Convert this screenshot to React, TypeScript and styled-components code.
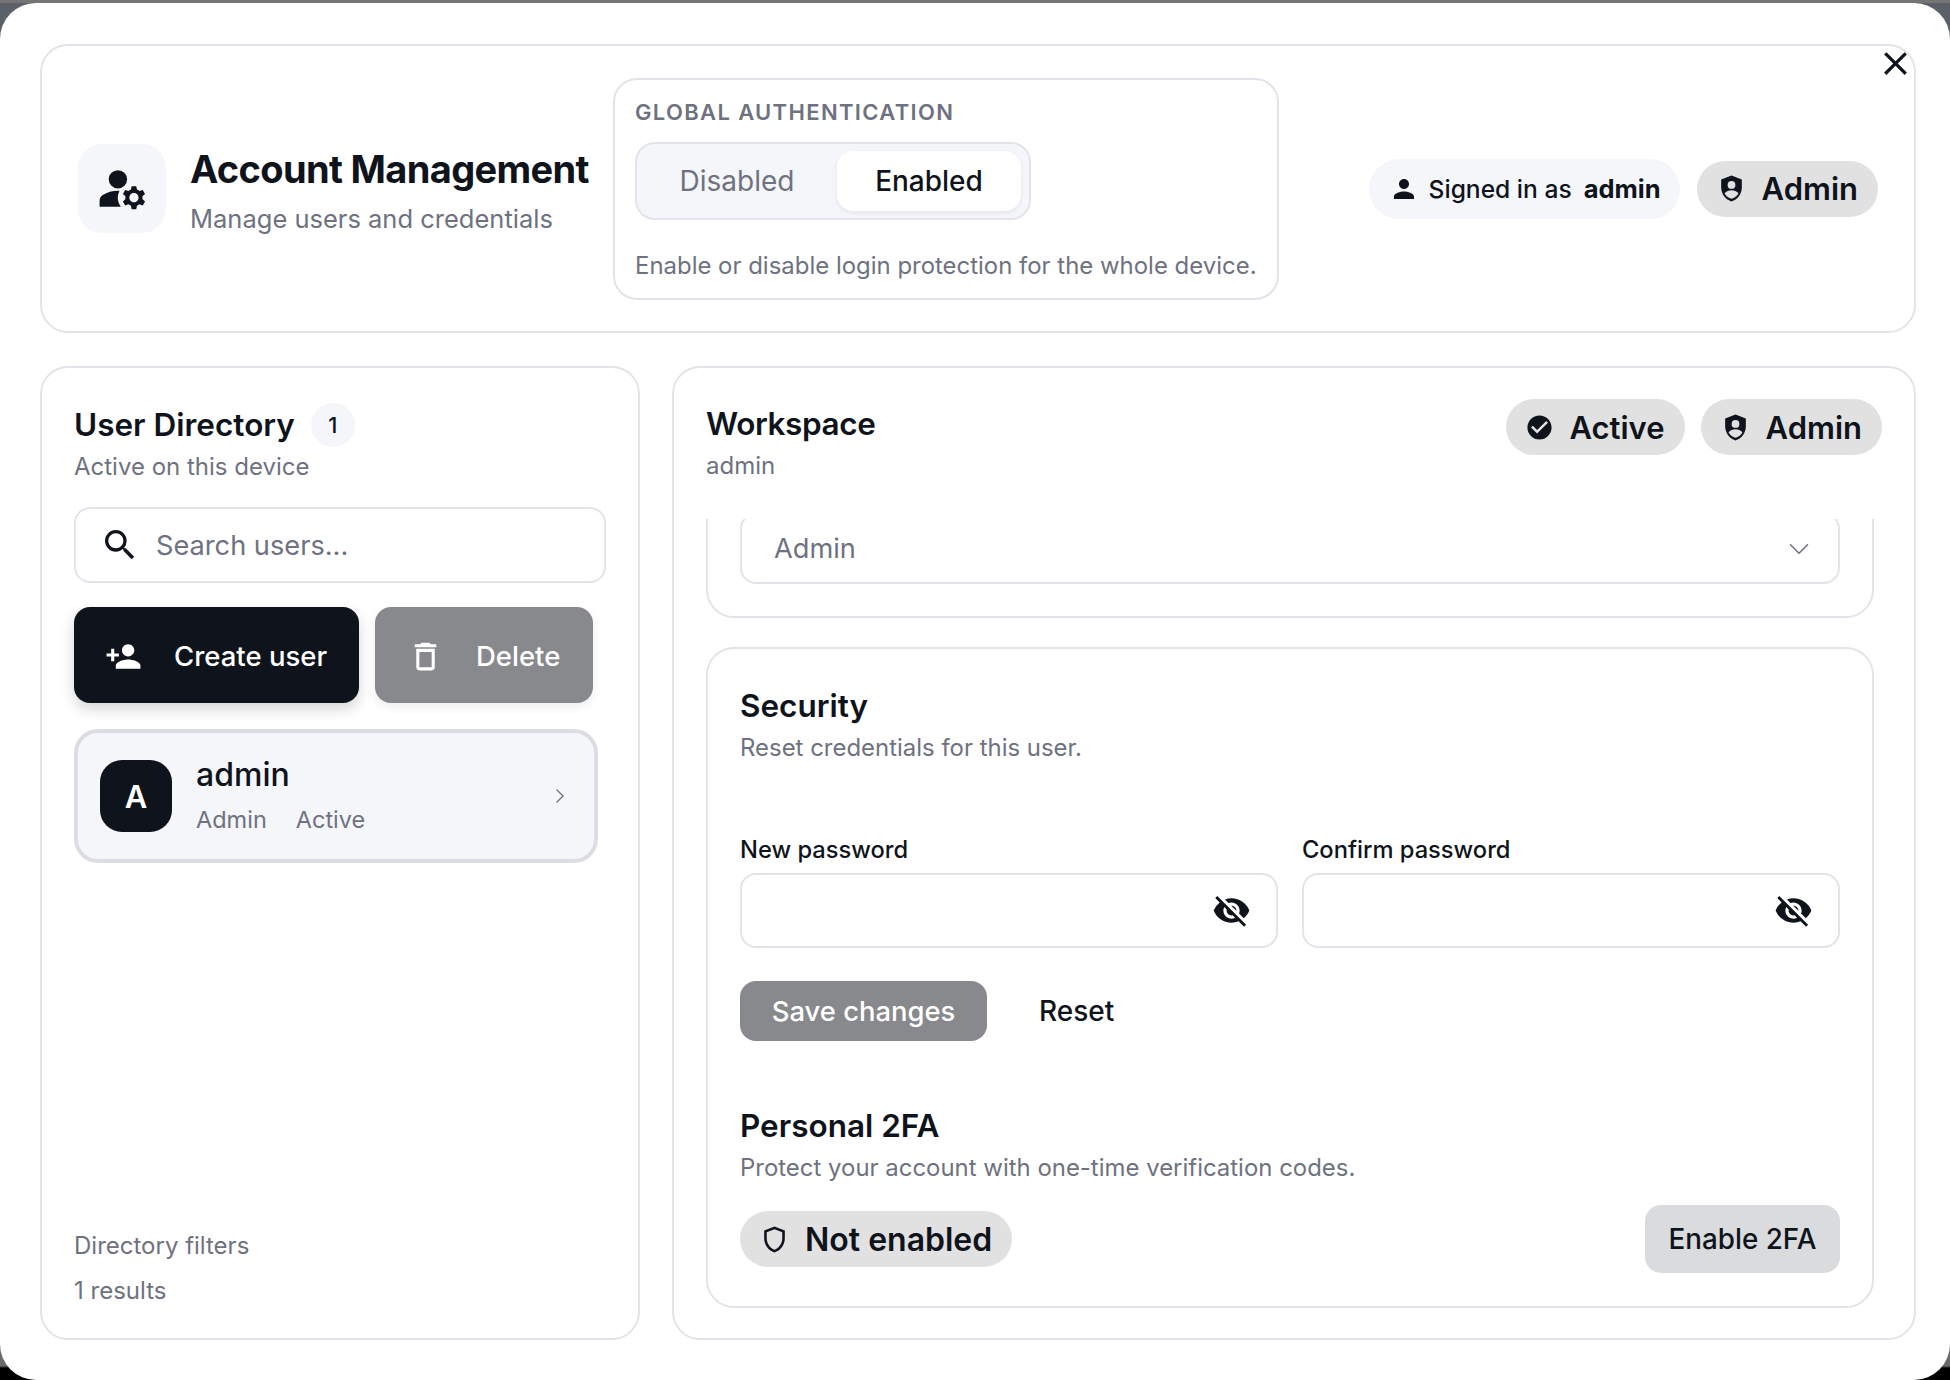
import React from "react";
import styled, { createGlobalStyle } from "styled-components";
import {
  MdManageAccounts,
  MdPerson,
  MdSearch,
  MdPersonAdd,
  MdOutlineDelete,
  MdCheckCircle,
  MdVisibilityOff,
  MdOutlineShield,
  MdClose,
} from "react-icons/md";
import { ChevronDown, ChevronRight } from "lucide-react";

const ink = "#0f141c";
const muted = "#6e7280";
const line = "#e3e4ea";
const soft = "#f5f6fa";
const chip = "#e1e1e2";

const GlobalStyle = createGlobalStyle`
  html, body {
    margin: 0;
    padding: 0;
    height: 1380px;
    overflow: hidden;
    background: linear-gradient(180deg, #757575 0, #757575 3px, #5c6068 3px, #6a6a6a 1366px, #000 1368px);
  }
  * {
    box-sizing: border-box;
  }
  body {
    font-family: Inter, "Liberation Sans", sans-serif;
    color: ${ink};
  }
`;

const Modal = styled.div`
  position: relative;
  margin-top: 3px;
  height: 1377px;
  padding: 41px 34px 40px 40px;
  background: #fff;
  border-radius: 36px;
  display: flex;
  flex-direction: column;
  gap: 33px;
`;

const CloseButton = styled.div`
  position: absolute;
  top: 41px;
  right: 35px;
  display: flex;
  color: ${ink};
`;

const Header = styled.header`
  height: 289px;
  flex: none;
  display: flex;
  align-items: center;
  padding: 0 36px;
  border: 2px solid ${line};
  border-radius: 28px;
`;

const IconTile = styled.div`
  width: 88px;
  height: 89px;
  flex: none;
  display: flex;
  align-items: center;
  justify-content: center;
  background: ${soft};
  border-radius: 24px;
`;

const TitleBlock = styled.div`
  width: 423px;
  flex: none;
  margin-left: 24px;
  padding-top: 4px;
`;

const PageTitle = styled.h1`
  margin: 0;
  font-size: 38px;
  line-height: 48px;
  font-weight: 700;
  letter-spacing: -0.65px;
  white-space: nowrap;
`;

const PageSub = styled.div`
  margin-top: 8px;
  font-size: 25.5px;
  line-height: 36px;
  color: ${muted};
  white-space: nowrap;
`;

const AuthCard = styled.section`
  width: 666px;
  height: 222px;
  flex: none;
  padding: 18px 20px;
  border: 2px solid ${line};
  border-radius: 24px;
`;

const AuthLabel = styled.div`
  font-size: 22px;
  line-height: 28px;
  font-weight: 600;
  letter-spacing: 1.35px;
  color: ${muted};
`;

const Toggle = styled.div`
  margin-top: 16px;
  width: 396px;
  height: 78px;
  display: flex;
  align-items: center;
  padding-right: 7px;
  background: ${soft};
  border: 2px solid ${line};
  border-radius: 20px;
`;

const ToggleOption = styled.div<{ $on?: boolean }>`
  height: 60px;
  width: ${(p) => (p.$on ? "184px" : "200px")};
  display: flex;
  align-items: center;
  justify-content: center;
  font-size: 28px;
  font-weight: ${(p) => (p.$on ? 500 : 400)};
  color: ${(p) => (p.$on ? ink : muted)};
  background: ${(p) => (p.$on ? "#fff" : "transparent")};
  border-radius: 16px;
  box-shadow: ${(p) => (p.$on ? "0 2px 4px rgba(15,20,28,0.08)" : "none")};
`;

const AuthHelp = styled.div`
  margin-top: 31px;
  font-size: 23.95px;
  line-height: 30px;
  color: ${muted};
  white-space: nowrap;
`;

const HeaderPills = styled.div`
  margin-left: auto;
  display: flex;
  align-items: center;
  gap: 17px;
`;

const SignedIn = styled.div`
  height: 60px;
  display: flex;
  align-items: center;
  padding: 0 19px 0 20px;
  background: ${soft};
  border-radius: 30px;
  font-size: 24.6px;
  font-weight: 500;
  white-space: nowrap;
`;

const SignedName = styled.strong`
  margin-left: 12px;
  font-size: 25.5px;
  font-weight: 700;
`;

const Pill = styled.div<{ $size?: number }>`
  height: 56px;
  display: flex;
  align-items: center;
  gap: 15px;
  padding: 0 20px 0 19px;
  background: ${chip};
  border-radius: 28px;
  font-size: ${(p) => p.$size ?? 31}px;
  font-weight: 600;
  white-space: nowrap;
`;

const Columns = styled.div`
  flex: 1;
  min-height: 0;
  display: flex;
  gap: 32px;
`;

const Panel = styled.section`
  border: 2px solid ${line};
  border-radius: 28px;
`;

const Directory = styled(Panel)`
  width: 600px;
  flex: none;
  display: flex;
  flex-direction: column;
  padding: 35px 32px 32px;
`;

const HeadingRow = styled.div`
  display: flex;
  align-items: center;
  gap: 16px;
  height: 44px;
`;

const PanelTitle = styled.h2`
  margin: 0;
  font-size: 31.5px;
  line-height: 40px;
  font-weight: 600;
`;

const WorkspaceTitle = styled(PanelTitle)`
  letter-spacing: -0.4px;
`;

const CountBadge = styled.span`
  width: 44px;
  height: 44px;
  display: flex;
  align-items: center;
  justify-content: center;
  background: ${soft};
  border-radius: 50%;
  font-size: 22px;
  font-weight: 500;
`;

const PanelSub = styled.div`
  margin-top: 5px;
  font-size: 24px;
  line-height: 30px;
  color: ${muted};
`;

const WorkspaceSub = styled(PanelSub)`
  margin-top: 7px;
`;

const SearchBox = styled.div`
  margin-top: 25px;
  height: 76px;
  width: 532px;
  display: flex;
  align-items: center;
  gap: 16px;
  padding: 0 24px;
  border: 2px solid ${line};
  border-radius: 16px;
  font-size: 27.2px;
  color: ${muted};
  background: #fff;
`;

const ActionRow = styled.div`
  margin-top: 24px;
  display: flex;
  gap: 16px;
`;

const ActionButton = styled.div<{ $width: number; $dim?: boolean }>`
  width: ${(p) => p.$width}px;
  height: 96px;
  display: flex;
  align-items: center;
  gap: 32px;
  padding: 2px 0 0 ${(p) => (p.$dim ? 32 : 31)}px;
  color: #fff;
  background: ${(p) => (p.$dim ? "#88898d" : ink)};
  border-radius: 16px;
  font-size: 27.5px;
  font-weight: 500;
  box-shadow: ${(p) => (p.$dim ? "0 4px 10px rgba(15,20,28,0.08)" : "0 6px 14px rgba(15,20,28,0.18)")};
`;

const UserRow = styled.div`
  margin-top: 26px;
  width: 524px;
  height: 134px;
  display: flex;
  align-items: center;
  padding: 0 22px;
  background: ${soft};
  border: 4px solid #dcdde3;
  border-radius: 24px;
`;

const Avatar = styled.div`
  width: 72px;
  height: 72px;
  flex: none;
  display: flex;
  align-items: center;
  justify-content: center;
  background: ${ink};
  color: #fff;
  border-radius: 22px;
  font-size: 31px;
  font-weight: 600;
`;

const UserText = styled.div`
  margin-left: 24px;
  flex: 1;
`;

const UserName = styled.div`
  margin-top: -3px;
  font-size: 32px;
  line-height: 40px;
  font-weight: 500;
`;

const UserMeta = styled.div`
  margin-top: 10px;
  display: flex;
  gap: 29px;
  font-size: 23.5px;
  line-height: 30px;
  color: ${muted};
`;

const Footer = styled.div`
  margin-top: auto;
  font-size: 24px;
  line-height: 30px;
  color: ${muted};
  display: flex;
  flex-direction: column;
  gap: 15px;
`;

const Workspace = styled(Panel)`
  flex: 1;
  display: flex;
  flex-direction: column;
  padding: 31px 32px 26px 32px;
  overflow: hidden;
`;

const WorkspaceHead = styled.div`
  height: 120px;
  flex: none;
  display: flex;
  justify-content: space-between;
`;

const Heading = styled.div`
  padding-top: 5px;
`;

const HeadPills = styled.div`
  display: flex;
  gap: 16px;
  align-items: flex-start;
`;

const ScrollArea = styled.div`
  flex: 1;
  min-height: 0;
  overflow: hidden;
  margin-right: 8px;
  display: flex;
  flex-direction: column;
  gap: 29px;
`;

const RoleCard = styled.div`
  margin-top: -60px;
  height: 159px;
  flex: none;
  padding: 52px 32px 0;
  border: 2px solid ${line};
  border-radius: 28px;
`;

const SelectBox = styled.div`
  height: 71px;
  display: flex;
  align-items: center;
  justify-content: space-between;
  padding: 0 22px 0 32px;
  border: 2px solid ${line};
  border-radius: 16px;
  font-size: 27.2px;
  color: ${muted};
`;

const SecurityCard = styled.div`
  flex: none;
  padding: 37px 32px 33px;
  border: 2px solid ${line};
  border-radius: 28px;
`;

const SectionTitle = styled.h3<{ $top?: number }>`
  margin: ${(p) => p.$top ?? 0}px 0 0;
  font-size: 31.5px;
  line-height: 40px;
  font-weight: 600;
`;

const SectionSub = styled.div<{ $top: number }>`
  margin-top: ${(p) => p.$top}px;
  font-size: 23.95px;
  line-height: 30px;
  color: ${muted};
`;

const FieldGrid = styled.div`
  margin-top: 73px;
  display: grid;
  grid-template-columns: 1fr 1fr;
  gap: 24px;
`;

const FieldLabel = styled.label`
  display: block;
  font-size: 23.7px;
  line-height: 28px;
  font-weight: 500;
`;

const PasswordBox = styled.div`
  margin-top: 9px;
  height: 75px;
  display: flex;
  align-items: center;
  justify-content: flex-end;
  padding-right: 25px;
  border: 2px solid ${line};
  border-radius: 16px;
`;

const FormActions = styled.div`
  margin-top: 33px;
  display: flex;
  align-items: center;
  gap: 52px;
`;

const SaveButton = styled.div`
  width: 247px;
  height: 60px;
  display: flex;
  align-items: center;
  justify-content: center;
  color: #fff;
  background: #88898d;
  border-radius: 16px;
  font-size: 27.4px;
  font-weight: 500;
`;

const ResetButton = styled.div`
  font-size: 28px;
  font-weight: 500;
`;

const TwoFactorRow = styled.div`
  margin-top: 22px;
  display: flex;
  align-items: center;
  justify-content: space-between;
`;

const EnableButton = styled.div`
  width: 195px;
  height: 68px;
  display: flex;
  align-items: center;
  justify-content: center;
  background: #dadbdd;
  border-radius: 16px;
  font-size: 27.8px;
  font-weight: 500;
`;

function ShieldPerson({ size, hole }: { size: number; hole: string }) {
  return (
    <svg width={size} height={size} viewBox="0 0 24 24" aria-hidden="true">
      <path fill={ink} d="M12 2 4 5v6.1c0 5 3.4 9.7 8 10.9 4.6-1.2 8-5.9 8-10.9V5l-8-3Z" />
      <circle cx="12" cy="9.200" r="3" fill={hole} />
      <path fill={hole} d="M6.600 15.600c1.300-1.500 3.300-2.300 5.400-2.300s4.100.8 5.400 2.300c-1.100 2.100-3 3.600-5.400 4.400-2.400-.8-4.300-2.300-5.400-4.400Z" />
    </svg>
  );
}

export default function App() {
  return (
    <>
      <GlobalStyle />
      <Modal>
        <CloseButton>
          <MdClose size={39} />
        </CloseButton>
        <Header>
          <IconTile>
            <MdManageAccounts size={55} color={ink} />
          </IconTile>
          <TitleBlock>
            <PageTitle>Account Management</PageTitle>
            <PageSub>Manage users and credentials</PageSub>
          </TitleBlock>
          <AuthCard>
            <AuthLabel>GLOBAL AUTHENTICATION</AuthLabel>
            <Toggle>
              <ToggleOption>Disabled</ToggleOption>
              <ToggleOption $on>Enabled</ToggleOption>
            </Toggle>
            <AuthHelp>Enable or disable login protection for the whole device.</AuthHelp>
          </AuthCard>
          <HeaderPills>
            <SignedIn>
              <MdPerson size={30} color={ink} style={{ marginRight: 10 }} />
              Signed in as
              <SignedName>admin</SignedName>
            </SignedIn>
            <Pill>
              <ShieldPerson size={31} hole={chip} />
              Admin
            </Pill>
          </HeaderPills>
        </Header>
        <Columns>
          <Directory>
            <HeadingRow>
              <PanelTitle>User Directory</PanelTitle>
              <CountBadge>1</CountBadge>
            </HeadingRow>
            <PanelSub>Active on this device</PanelSub>
            <SearchBox>
              <MdSearch size={40} color={ink} />
              Search users...
            </SearchBox>
            <ActionRow>
              <ActionButton $width={285}>
                <MdPersonAdd size={37} />
                Create user
              </ActionButton>
              <ActionButton $width={218} $dim>
                <MdOutlineDelete size={37} />
                Delete
              </ActionButton>
            </ActionRow>
            <UserRow>
              <Avatar>A</Avatar>
              <UserText>
                <UserName>admin</UserName>
                <UserMeta>
                  <span>Admin</span>
                  <span>Active</span>
                </UserMeta>
              </UserText>
              <ChevronRight size={24} color={muted} strokeWidth={1.4} />
            </UserRow>
            <Footer>
              <span>Directory filters</span>
              <span>1 results</span>
            </Footer>
          </Directory>
          <Workspace>
            <WorkspaceHead>
              <Heading>
                <WorkspaceTitle>Workspace</WorkspaceTitle>
                <WorkspaceSub>admin</WorkspaceSub>
              </Heading>
              <HeadPills>
                <Pill>
                  <MdCheckCircle size={29} color={ink} />
                  Active
                </Pill>
                <Pill>
                  <ShieldPerson size={31} hole={chip} />
                  Admin
                </Pill>
              </HeadPills>
            </WorkspaceHead>
            <ScrollArea>
              <RoleCard>
                <SelectBox>
                  Admin
                  <ChevronDown size={34} color={muted} strokeWidth={1.1} />
                </SelectBox>
              </RoleCard>
              <SecurityCard>
                <SectionTitle>Security</SectionTitle>
                <SectionSub $top={7}>Reset credentials for this user.</SectionSub>
                <FieldGrid>
                  <div>
                    <FieldLabel>New password</FieldLabel>
                    <PasswordBox>
                      <MdVisibilityOff size={39} color={ink} />
                    </PasswordBox>
                  </div>
                  <div>
                    <FieldLabel>Confirm password</FieldLabel>
                    <PasswordBox>
                      <MdVisibilityOff size={39} color={ink} />
                    </PasswordBox>
                  </div>
                </FieldGrid>
                <FormActions>
                  <SaveButton>Save changes</SaveButton>
                  <ResetButton>Reset</ResetButton>
                </FormActions>
                <SectionTitle $top={65}>Personal 2FA</SectionTitle>
                <SectionSub $top={7}>Protect your account with one-time verification codes.</SectionSub>
                <TwoFactorRow>
                  <Pill $size={32}>
                    <MdOutlineShield size={31} color={ink} />
                    Not enabled
                  </Pill>
                  <EnableButton>Enable 2FA</EnableButton>
                </TwoFactorRow>
              </SecurityCard>
            </ScrollArea>
          </Workspace>
        </Columns>
      </Modal>
    </>
  );
}
